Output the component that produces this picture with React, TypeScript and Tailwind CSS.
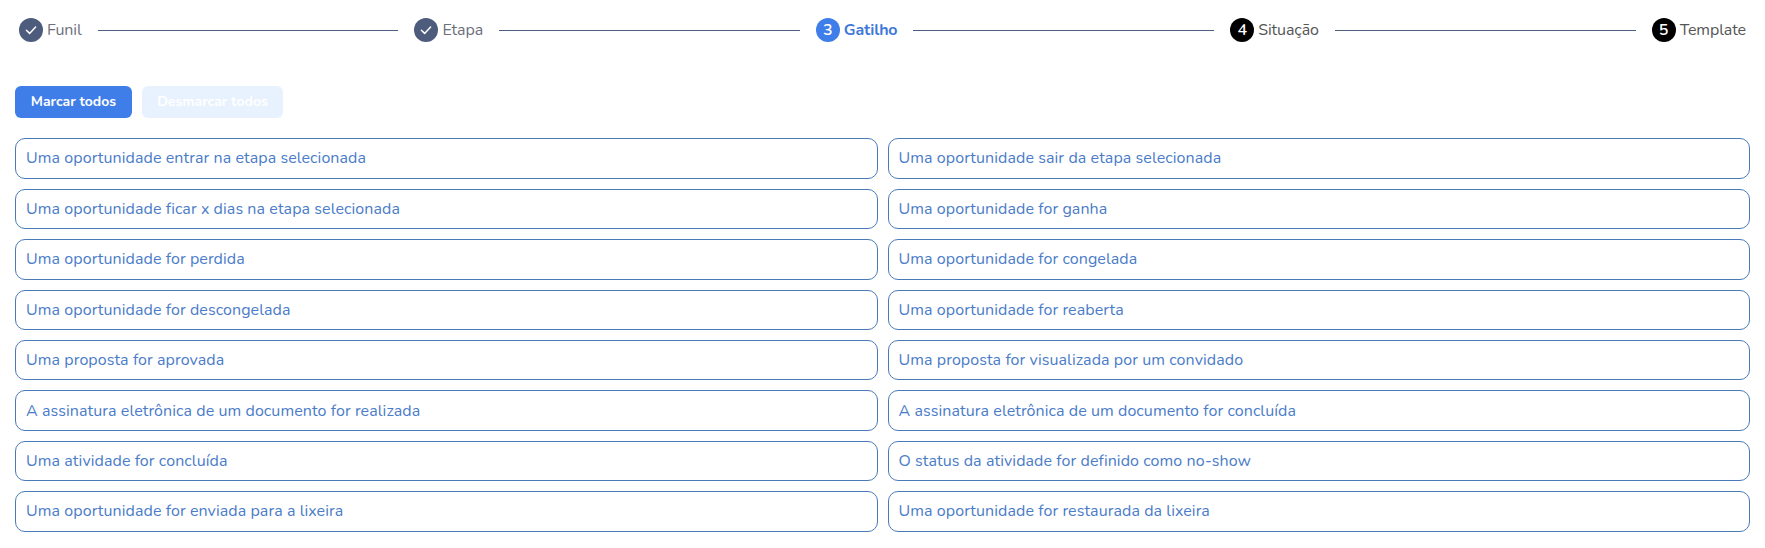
const items = [
  "Uma oportunidade entrar na etapa selecionada",
  "Uma oportunidade sair da etapa selecionada",
  "Uma oportunidade ficar x dias na etapa selecionada",
  "Uma oportunidade for ganha",
  "Uma oportunidade for perdida",
  "Uma oportunidade for congelada",
  "Uma oportunidade for descongelada",
  "Uma oportunidade for reaberta",
  "Uma proposta for aprovada",
  "Uma proposta for visualizada por um convidado",
  "A assinatura eletrônica de um documento for realizada",
  "A assinatura eletrônica de um documento for concluída",
  "Uma atividade for concluída",
  "O status da atividade for definido como no-show",
  "Uma oportunidade for enviada para a lixeira",
  "Uma oportunidade for restaurada da lixeira",
];

function Check() {
  return (
    <svg width="14" height="14" viewBox="0 0 14 14" fill="none">
      <path d="M2.4 7.2 5.6 10.4 11.6 4" stroke="#fff" strokeWidth="1.5" strokeLinecap="round" strokeLinejoin="round" />
    </svg>
  );
}

function Line() {
  return <div className="h-px flex-1 bg-[#4d5f80] mx-3" />;
}

function Step({ label, n, state }: { label: string; n: number; state: "done" | "active" | "todo" }) {
  const circle = state === "done" ? "bg-[#4d5b7c]" : state === "active" ? "bg-[#3f7de8]" : "bg-black";
  const text =
    state === "done"
      ? "text-[#6b6f7b] tracking-[-0.1px]"
      : state === "active"
        ? "text-[#4079d8] font-bold tracking-[-0.15px]"
        : "text-[#555555] tracking-[-0.1px]";
  return (
    <div className="flex items-center gap-1 px-1">
      <div className={`w-6 h-6 rounded-full flex items-center justify-center text-white text-[16px] font-semibold ${circle}`}>
        {state === "done" ? <Check /> : n}
      </div>
      <span className={`text-[16px] leading-6 ${text}`}>{label}</span>
    </div>
  );
}

export default function App() {
  return (
    <div className="min-h-[548px] bg-white px-[15px] pt-[18px] font-['Nunito','Noto_Sans',sans-serif]">
      <div className="flex items-center h-6">
        <Step label="Funil" n={1} state="done" />
        <Line />
        <Step label="Etapa" n={2} state="done" />
        <Line />
        <Step label="Gatilho" n={3} state="active" />
        <Line />
        <Step label="Situação" n={4} state="todo" />
        <Line />
        <Step label="Template" n={5} state="todo" />
      </div>
      <div className="flex gap-[10px] mt-11">
        <button className="h-8 w-[117px] rounded-md bg-[#3f7de8] text-white text-[14px] leading-8 font-bold">Marcar todos</button>
        <button className="h-8 w-[141px] rounded-md bg-[#e8f2fe] text-white text-[14px] leading-8 font-bold">Desmarcar todos</button>
      </div>
      <div className="grid grid-cols-2 gap-x-[10px] gap-y-[10px] mt-[20.2px]">
        {items.map((t) => (
          <div key={t} className="h-[40.44px] flex items-center px-[10px] rounded-[10px] border border-[#4a7ab8] text-[#4a7cc8] text-[16px] tracking-[0.08px] bg-white">
            {t}
          </div>
        ))}
      </div>
    </div>
  );
}
